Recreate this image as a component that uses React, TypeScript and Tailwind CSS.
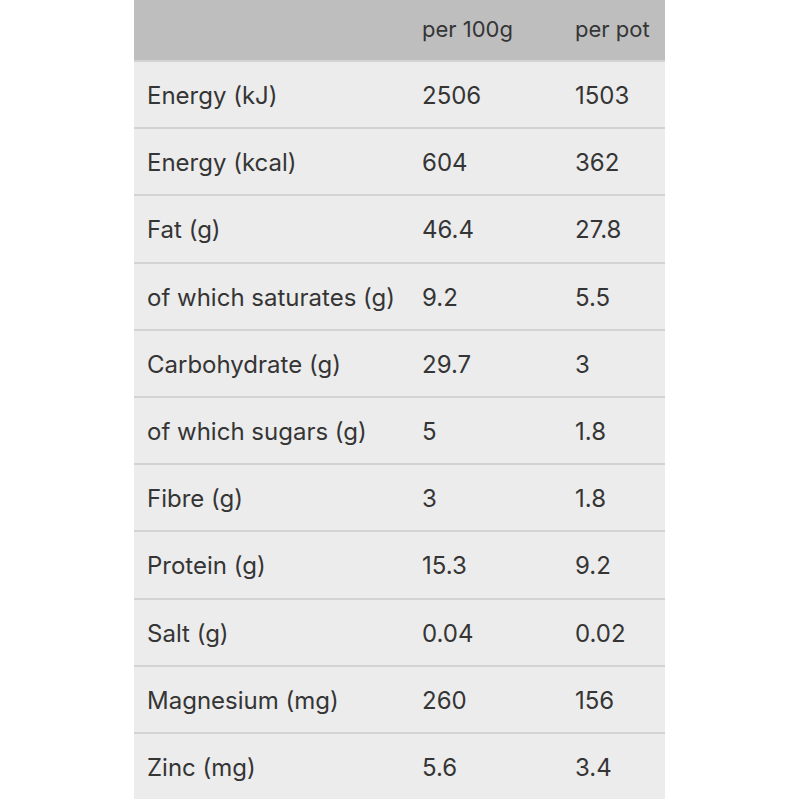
import React from 'react';

const rows: [string, string, string][] = [
  ['Energy (kJ)', '2506', '1503'],
  ['Energy (kcal)', '604', '362'],
  ['Fat (g)', '46.4', '27.8'],
  ['of which saturates (g)', '9.2', '5.5'],
  ['Carbohydrate (g)', '29.7', '3'],
  ['of which sugars (g)', '5', '1.8'],
  ['Fibre (g)', '3', '1.8'],
  ['Protein (g)', '15.3', '9.2'],
  ['Salt (g)', '0.04', '0.02'],
  ['Magnesium (mg)', '260', '156'],
  ['Zinc (mg)', '5.6', '3.4'],
];

const App: React.FC = () => {
  return (
    <div className="w-[800px] h-[800px] overflow-hidden bg-white">
      <div
        className="w-[531px] ml-[134px] text-[24px] text-[#353535]"
        style={{ fontFamily: 'Inter, "Noto Sans", sans-serif' }}
      >
        <div className="grid grid-cols-[275px_153px_1fr] h-[60px] items-center bg-[#bebebe] text-[22px] pb-[2px]">
          <div className="pl-[13px]"></div>
          <div className="pl-[13px]">per 100g</div>
          <div className="pl-[13px]">per pot</div>
        </div>
        {rows.map(([name, per100, perPot]) => (
          <div
            key={name}
            className="grid grid-cols-[275px_153px_1fr] h-[67.2px] items-center bg-[#ececec] border-t-2 border-[#d3d3d3] pt-[3px]"
          >
            <div className="pl-[13px] whitespace-nowrap">{name}</div>
            <div className="pl-[13px]">{per100}</div>
            <div className="pl-[13px]">{perPot}</div>
          </div>
        ))}
      </div>
    </div>
  );
};

export default App;
